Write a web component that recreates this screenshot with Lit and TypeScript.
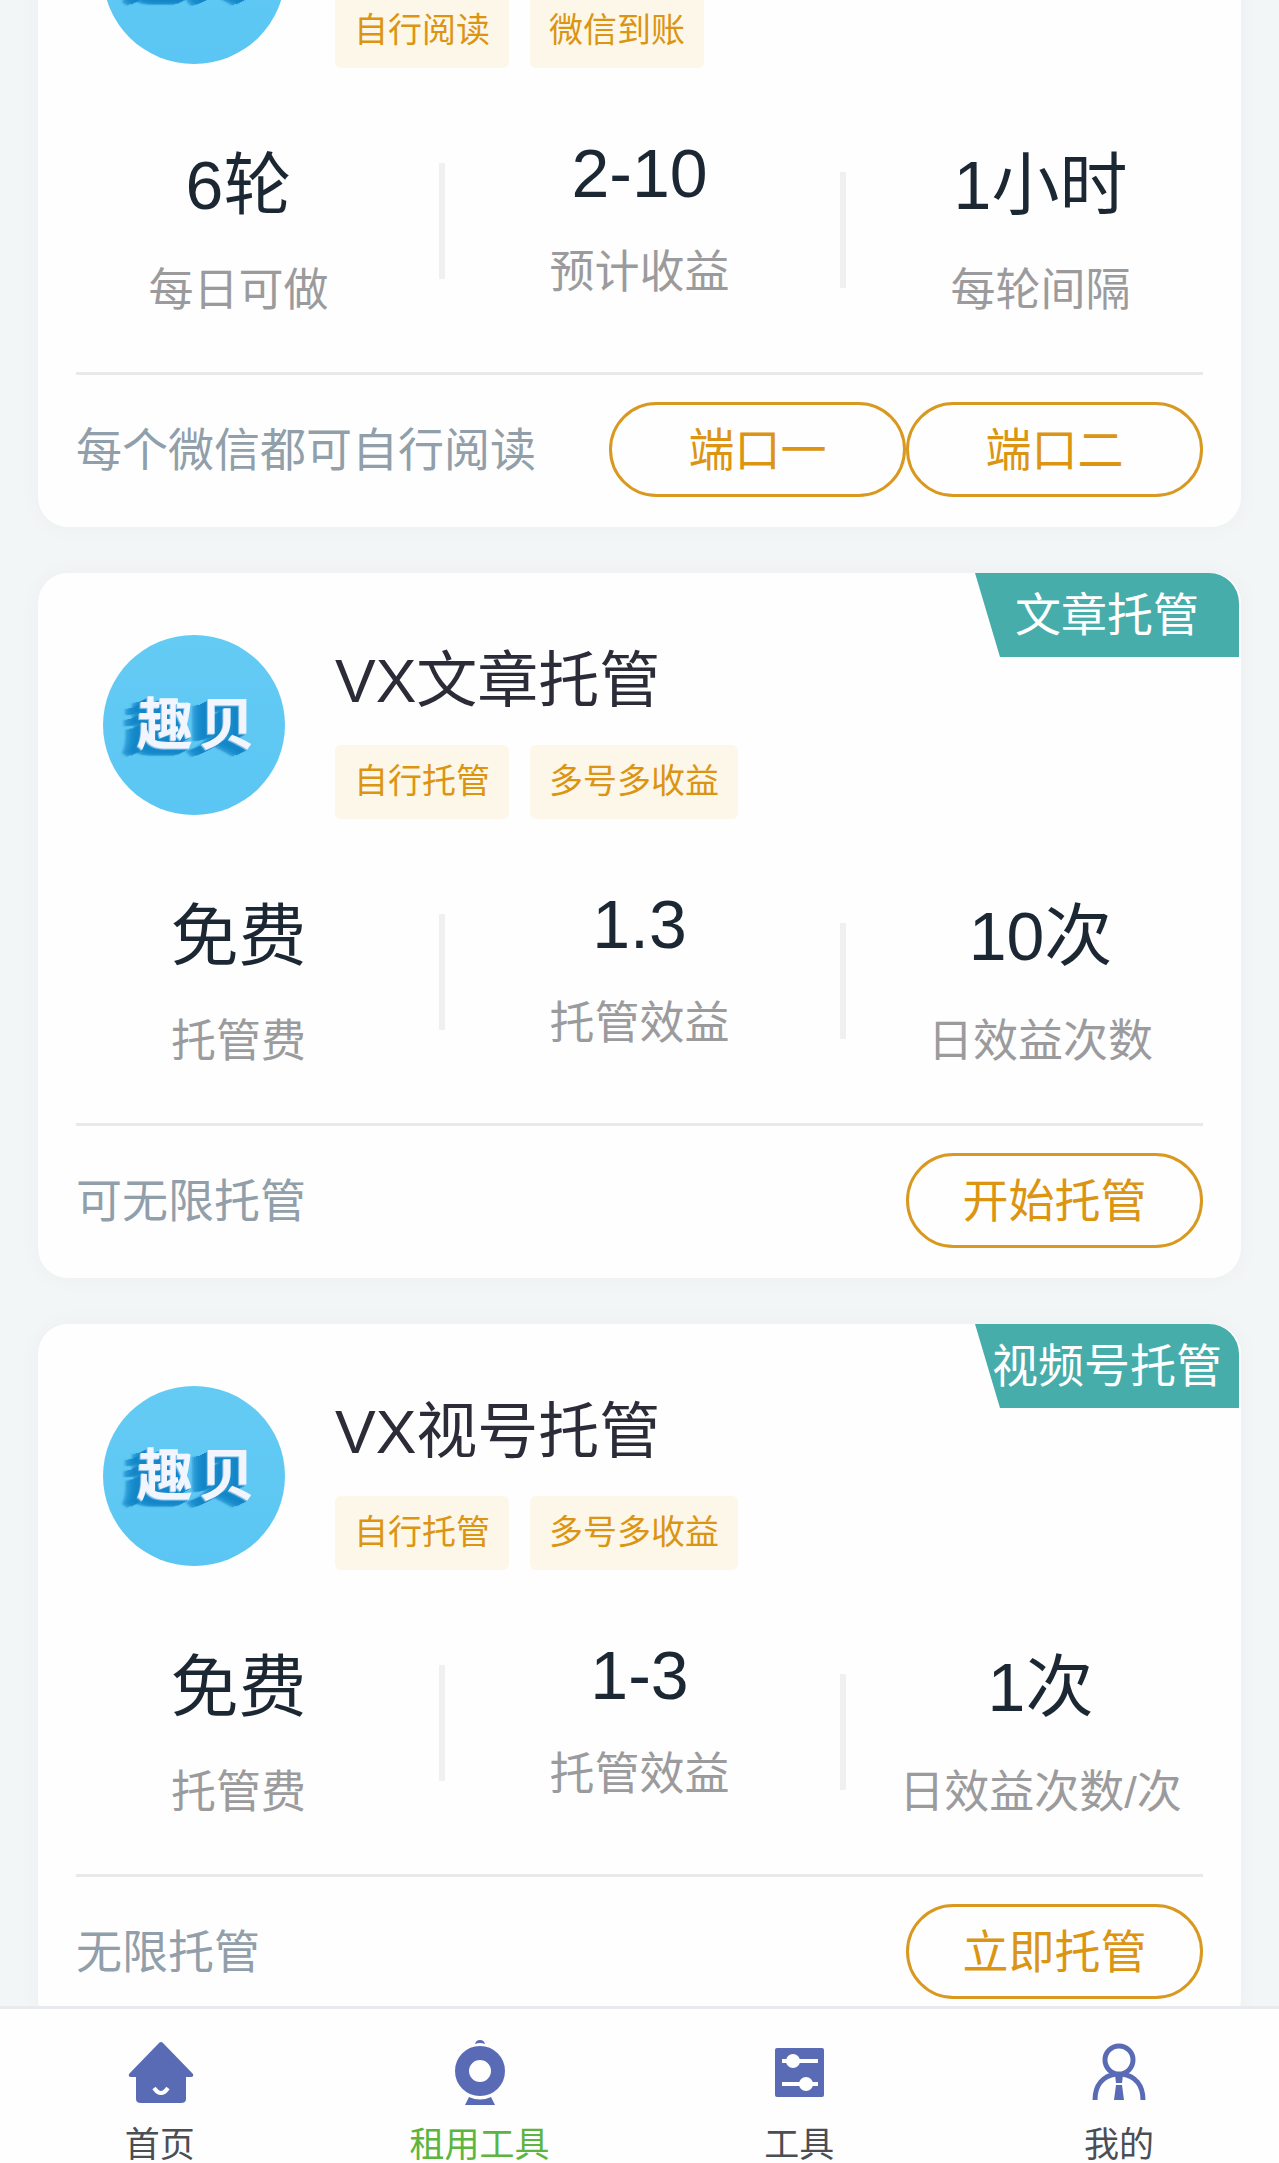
import { LitElement, html, css, svg, nothing } from "lit";
import { customElement, property } from "lit/decorators.js";

interface Stat {
  value: string;
  label: string;
}

interface Task {
  title: string;
  badge: string;
  tags: string[];
  stats: Stat[];
  note: string;
  actions: string[];
}

const TASKS: Task[] = [
  {
    title: "",
    badge: "",
    tags: ["自行阅读", "微信到账"],
    stats: [
      { value: "6轮", label: "每日可做" },
      { value: "2-10", label: "预计收益" },
      { value: "1小时", label: "每轮间隔" },
    ],
    note: "每个微信都可自行阅读",
    actions: ["端口一", "端口二"],
  },
  {
    title: "VX文章托管",
    badge: "文章托管",
    tags: ["自行托管", "多号多收益"],
    stats: [
      { value: "免费", label: "托管费" },
      { value: "1.3", label: "托管效益" },
      { value: "10次", label: "日效益次数" },
    ],
    note: "可无限托管",
    actions: ["开始托管"],
  },
  {
    title: "VX视号托管",
    badge: "视频号托管",
    tags: ["自行托管", "多号多收益"],
    stats: [
      { value: "免费", label: "托管费" },
      { value: "1-3", label: "托管效益" },
      { value: "1次", label: "日效益次数/次" },
    ],
    note: "无限托管",
    actions: ["立即托管"],
  },
];

const ICONS = {
  home: svg`
    <path fill="currentColor" d="M35 6 Q37 4 39 6 L69 37 Q70 40 67 40 H62 V62 Q62 66 57 66 H17 Q12 66 12 62 V40 H7 Q4 40 5 37 Z" />
    <path fill="none" stroke="#fff" stroke-width="4" d="M30 51 Q37 61 44 51" />`,
  camera: svg`
    <path fill="currentColor" d="M31 7 Q32 3 36 3 Q40 3 41 7 Q36 5 31 7 Z" />
    <circle cx="36" cy="34" r="18" fill="none" stroke="currentColor" stroke-width="14" />
    <path fill="currentColor" d="M25 60 Q36 65 47 60 L51 68 H21 Z" />`,
  sliders: svg`
    <rect x="12" y="11" width="49" height="49" rx="2" fill="currentColor" />
    <path stroke="#fff" stroke-width="4" d="M19 24 H55 M19 47 H55" />
    <circle cx="30" cy="24" r="7" fill="#fff" />
    <circle cx="43" cy="47" r="7" fill="#fff" />`,
  person: svg`
    <circle cx="36" cy="23" r="14" fill="none" stroke="currentColor" stroke-width="5" />
    <path fill="none" stroke="currentColor" stroke-width="5" d="M12 63 C12 48 20 39 33 37 M60 63 C60 48 52 39 39 37" />
    <path fill="currentColor" d="M32 38 H40 L39 46 H33 Z M33 48 H39 L41 63 H31 Z" />`,
};

const TABS = [
  { label: "首页", icon: ICONS.home, active: false },
  { label: "租用工具", icon: ICONS.camera, active: true },
  { label: "工具", icon: ICONS.sliders, active: false },
  { label: "我的", icon: ICONS.person, active: false },
];

@customElement("task-card")
class TaskCard extends LitElement {
  @property({ attribute: false }) task!: Task;

  static styles = css`
    :host {
      display: block;
    }
    .card {
      position: relative;
      padding: 62px 0 30px;
      border-radius: 30px;
      background: #fefefe;
      box-shadow: 0 0 24px rgba(60, 60, 60, 0.03);
    }
    .badge {
      position: absolute;
      top: 0;
      right: 2px;
      width: 264px;
      border-top-right-radius: 30px;
      background: #46adab;
      clip-path: polygon(0 0, 100% 0, 100% 100%, 25px 100%);
      color: #fff;
      font-size: 46px;
      line-height: 84px;
      text-align: center;
      white-space: nowrap;
    }
    .head {
      display: flex;
      align-items: flex-start;
      gap: 50px;
      padding-left: 65px;
    }
    .avatar {
      display: flex;
      box-sizing: border-box;
      flex: none;
      align-items: center;
      justify-content: center;
      gap: 6px;
      width: 182px;
      height: 180px;
      padding-left: 4px;
      border-radius: 50%;
      background: linear-gradient(#64cbf3, #5bc6f3);
      color: #f2f5fd;
      font-size: 56px;
      font-weight: 700;
      line-height: 60px;
      text-shadow: -1px 1px #8fc4ea, -2px 2px #1a8ccc, -4px 3px #1486c8,
        -6px 4px #1486c8, -8px 5px #168aca, -10px 6px #1a8ecd,
        -12px 6px #2093d0, -14px 7px #2a9bd5, -16px 7px 2px #38a3dc;
    }
    .info {
      display: flex;
      flex-direction: column;
      gap: 22px;
      padding-top: 4px;
    }
    .title {
      min-height: 84px;
      margin: 0;
      color: #2b2c38;
      font-size: 61px;
      font-weight: 400;
      line-height: 84px;
    }
    .tags {
      display: flex;
      gap: 21px;
    }
    .tag {
      padding: 0 19px 2px;
      border-radius: 6px;
      background: #fdf7e9;
      color: #db9512;
      font-size: 34px;
      line-height: 72px;
    }
    .stats {
      display: grid;
      grid-template-columns: repeat(3, 1fr);
      align-items: start;
      margin-top: 69px;
    }
    .stat {
      display: flex;
      align-items: center;
    }
    .stat + .stat {
      padding-right: 6px;
    }
    .stat + .stat::before {
      content: "";
      width: 6px;
      height: 116px;
      background: #f0f0f1;
    }
    .figures {
      flex: 1;
      text-align: center;
      white-space: nowrap;
    }
    .value {
      margin-bottom: 26px;
      color: #1b2833;
      font-size: 68px;
      line-height: 96px;
    }
    .value.numeric {
      margin-bottom: 32px;
      line-height: 72px;
    }
    .label {
      color: #9b9b9d;
      font-size: 45px;
      line-height: 64px;
    }
    .foot {
      display: flex;
      align-items: center;
      justify-content: space-between;
      margin: 49px 38px 0;
      padding-top: 27px;
      border-top: 3px solid #e9e9ea;
    }
    .note {
      color: #919faa;
      font-size: 46px;
      line-height: 64px;
    }
    .actions {
      display: flex;
    }
    .action {
      box-sizing: border-box;
      width: 297px;
      height: 95px;
      padding: 0;
      border: 3px solid #d9981f;
      border-radius: 48px;
      background: none;
      color: #db9512;
      font: inherit;
      font-size: 46px;
      line-height: 64px;
    }
  `;

  render() {
    const { title, badge, tags, stats, note, actions } = this.task;
    return html`
      <article class="card">
        ${badge ? html`<div class="badge">${badge}</div>` : nothing}
        <div class="head">
          <div class="avatar"><span>趣</span><span>贝</span></div>
          <div class="info">
            <h2 class="title">${title}</h2>
            <div class="tags">
              ${tags.map((tag) => html`<span class="tag">${tag}</span>`)}
            </div>
          </div>
        </div>
        <div class="stats">
          ${stats.map(
            (stat) => html`
              <div class="stat">
                <div class="figures">
                  <div class="value ${/^[\d.-]+$/.test(stat.value) ? "numeric" : ""}">${stat.value}</div>
                  <div class="label">${stat.label}</div>
                </div>
              </div>
            `,
          )}
        </div>
        <div class="foot">
          <span class="note">${note}</span>
          <div class="actions">
            ${actions.map((action) => html`<button class="action" type="button">${action}</button>`)}
          </div>
        </div>
      </article>
    `;
  }
}

@customElement("app-root")
class AppRoot extends LitElement {
  static styles = css`
    :host {
      display: flex;
      flex-direction: column;
      height: 100vh;
      overflow: hidden;
      background: #f3f6f7;
      font-family: "Liberation Sans", "Noto Sans CJK SC", sans-serif;
    }
    .feed {
      flex: 1;
      min-height: 0;
      overflow: hidden;
    }
    /* The feed rests part-way down its first card. */
    .list {
      display: flex;
      flex-direction: column;
      gap: 46px;
      margin-top: -178px;
      padding: 0 38px;
    }
    .tabbar {
      display: grid;
      flex: none;
      grid-template-columns: repeat(4, 1fr);
      border-top: 3px solid #e9eaee;
      background: #fefefe;
    }
    .tab {
      display: flex;
      flex-direction: column;
      align-items: center;
      gap: 18px;
      padding-top: 28px;
      color: #4b4e54;
      font-size: 35px;
      line-height: 36px;
      text-decoration: none;
    }
    .tab.active {
      color: #5cb53f;
    }
    .icon {
      width: 72px;
      height: 72px;
      color: #5a6bb5;
    }
  `;

  render() {
    return html`
      <main class="feed">
        <div class="list">
          ${TASKS.map((task) => html`<task-card .task=${task}></task-card>`)}
        </div>
      </main>
      <nav class="tabbar">
        ${TABS.map(
          (tab) => html`
            <a class="tab ${tab.active ? "active" : ""}" href="#">
              <svg class="icon" viewBox="0 0 72 72" aria-hidden="true">${tab.icon}</svg>
              <span>${tab.label}</span>
            </a>
          `,
        )}
      </nav>
    `;
  }
}
